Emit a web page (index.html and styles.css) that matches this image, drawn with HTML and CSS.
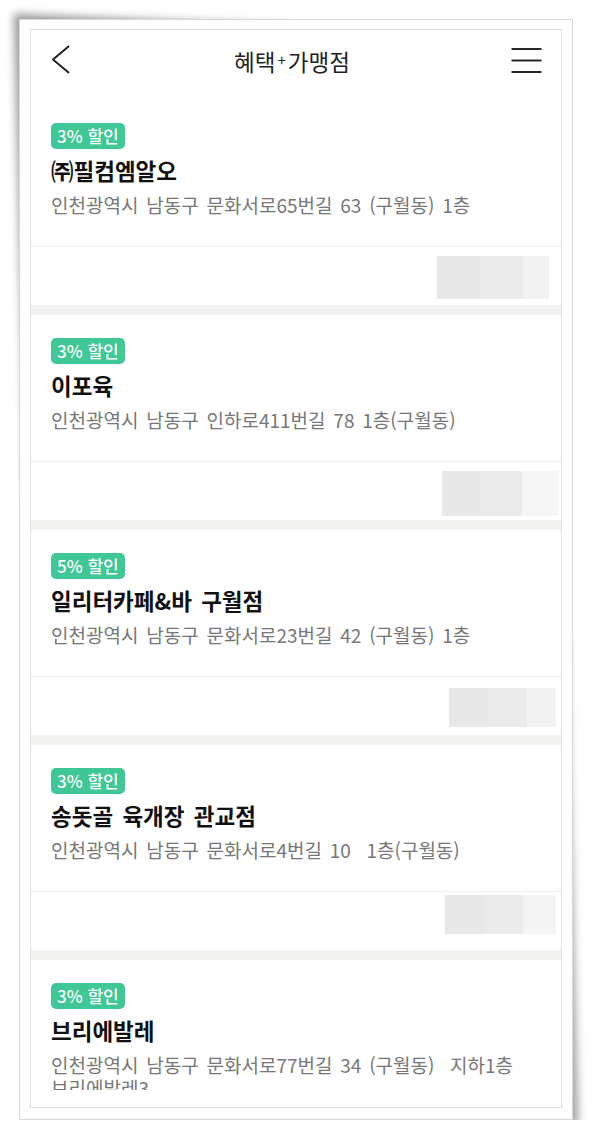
FILE: index.html
```html
<!DOCTYPE html>
<html lang="ko">
<head>
<meta charset="utf-8">
<title>혜택+가맹점</title>
<link rel="stylesheet" href="styles.css">
</head>
<body>
<div class="frame">
  <div class="screen">
    <header class="topbar">
      <svg class="back" width="20" height="30" viewBox="0 0 20 30" aria-label="뒤로">
        <polyline points="17.5,1.5 2,14.5 17.5,27.5" fill="none" stroke="#1e1e1e" stroke-width="1.9" stroke-linecap="round" stroke-linejoin="round"/>
      </svg>
      <h1 class="title">혜택<span class="plus">+</span>가맹점</h1>
      <svg class="menu" width="31" height="26" viewBox="0 0 31 26" aria-label="메뉴">
        <line x1="0.5" y1="2" x2="30.5" y2="2" stroke="#1e1e1e" stroke-width="1.9"/>
        <line x1="0.5" y1="13.5" x2="30.5" y2="13.5" stroke="#1e1e1e" stroke-width="1.9"/>
        <line x1="0.5" y1="25" x2="30.5" y2="25" stroke="#1e1e1e" stroke-width="1.9"/>
      </svg>
    </header>

    <div class="list">
      <section class="card">
        <div class="info">
          <span class="badge">3% 할인</span>
          <h2 class="name">㈜필컴엠알오</h2>
          <p class="addr">인천광역시 남동구 문화서로65번길 63 (구월동) 1층</p>
        </div>
        <div class="foot foot-1">
          <div class="blur"><span class="s1"></span><span class="s2"></span><span class="s3"></span></div>
        </div>
      </section>

      <section class="card">
        <div class="info">
          <span class="badge">3% 할인</span>
          <h2 class="name">이포육</h2>
          <p class="addr">인천광역시 남동구 인하로411번길 78 1층(구월동)</p>
        </div>
        <div class="foot foot-2">
          <div class="blur"><span class="s1"></span><span class="s2"></span><span class="s3"></span></div>
        </div>
      </section>

      <section class="card">
        <div class="info">
          <span class="badge">5% 할인</span>
          <h2 class="name">일리터카페&amp;바 구월점</h2>
          <p class="addr">인천광역시 남동구 문화서로23번길 42 (구월동) 1층</p>
        </div>
        <div class="foot foot-3">
          <div class="blur"><span class="s1"></span><span class="s2"></span><span class="s3"></span></div>
        </div>
      </section>

      <section class="card">
        <div class="info">
          <span class="badge">3% 할인</span>
          <h2 class="name">송돗골 육개장 관교점</h2>
          <p class="addr">인천광역시 남동구 문화서로4번길 10  1층(구월동)</p>
        </div>
        <div class="foot foot-4">
          <div class="blur"><span class="s1"></span><span class="s2"></span><span class="s3"></span></div>
        </div>
      </section>

      <section class="card">
        <div class="info">
          <span class="badge">3% 할인</span>
          <h2 class="name">브리에발레</h2>
          <p class="addr">인천광역시 남동구 문화서로77번길 34 (구월동)  지하1층 브리에발레3</p>
        </div>
      </section>
    </div>
  </div>
</div>
</body>
</html>
```

FILE: styles.css
```css
* { box-sizing: border-box; }

html {
  background: #ffffff;
}

body {
  margin: 0;
  padding: 0;
  font-family: "Noto Sans CJK KR", "Noto Sans", sans-serif;
  color: #111;
}

/* photo frame */
.frame {
  position: relative;
  margin: 19px 0 0 19px;
  width: 554px;
  padding: 9px 10px 11px 10px;
  background: #fff;
  border: 1px solid #d8d8d8;
}

.frame::before,
.frame::after {
  content: "";
  position: absolute;
  width: 50%;
  height: 45%;
  z-index: -1;
  background: #fff;
}

.frame::before {
  left: 0;
  top: 0;
  transform-origin: 0 0;
  transform: skew(1.4deg, 2.4deg);
  box-shadow: -6px -6px 9px rgba(0, 0, 0, 0.4);
}

.frame::after {
  right: 0;
  bottom: 0;
  transform-origin: 100% 100%;
  transform: skew(1.4deg, 2.4deg);
  box-shadow: 6px 6px 10px rgba(0, 0, 0, 0.38);
}

/* phone screen */
.screen {
  width: 532px;
  height: 1079px;
  border: 1px solid #e0e0e0;
  background: #fff;
  display: flex;
  flex-direction: column;
}

.topbar {
  height: 60px;
  flex: none;
  display: flex;
  align-items: center;
  justify-content: space-between;
  padding: 0 19px 0 20px;
}

.back { display: block; }
.menu { display: block; }

.title {
  margin: 0;
  font-size: 22.5px;
  font-weight: 400;
  color: #222;
  line-height: 30px;
  padding-left: 2px;
}

.plus {
  font-size: 15px;
  vertical-align: 5px;
  margin: 0 2px;
}

.list {
  height: 1000px;
  flex: none;
  overflow: hidden;
  padding-top: 10px;
}

.card {
  background: #fff;
  border-bottom: 10px solid #f2f2f1;
}

.info {
  padding: 23px 20px 30px 20px;
}

.badge {
  display: inline-block;
  height: 26px;
  line-height: 26px;
  padding: 0 6px;
  border-radius: 5px;
  background: #3fc795;
  color: #fff;
  font-size: 17px;
  font-weight: 500;
  vertical-align: top;
}

.name {
  margin: 6px 0 0 0;
  font-size: 22.5px;
  line-height: 30px;
  font-weight: 700;
  color: #111;
  word-spacing: 3px;
}

.addr {
  margin: 8px 0 0 0;
  font-size: 19px;
  line-height: 23px;
  color: #777;
  word-spacing: 2.5px;
  white-space: pre-wrap;
  word-break: keep-all;
}

.foot {
  height: 59px;
  border-top: 1px solid #f0f0f0;
  display: flex;
  justify-content: flex-end;
  align-items: flex-start;
}

.blur {
  display: flex;
}

.blur span { display: block; height: 100%; }
.s1 { background: #e8e8e8; }
.s2 { background: #ebebeb; }
.s3 { background: #f3f3f3; }

.foot-1 { padding: 9px 12px 0 0; }
.foot-1 .blur { height: 43px; }
.foot-1 .s1 { width: 43px; }
.foot-1 .s2 { width: 43px; }
.foot-1 .s3 { width: 26px; }

.foot-2 { padding: 9px 2px 0 0; }
.foot-2 .blur { height: 45px; }
.foot-2 .s1 { width: 39px; }
.foot-2 .s2 { width: 41px; }
.foot-2 .s3 { width: 37px; background: #f6f6f6; }

.foot-3 { padding: 11px 5px 0 0; }
.foot-3 .blur { height: 39px; }
.foot-3 .s1 { width: 39px; }
.foot-3 .s2 { width: 39px; }
.foot-3 .s3 { width: 29px; }

.foot-4 { padding: 3px 5px 0 0; }
.foot-4 .blur { height: 39px; }
.foot-4 .s1 { width: 39px; }
.foot-4 .s2 { width: 39px; }
.foot-4 .s3 { width: 33px; background: #f5f5f5; }
```
